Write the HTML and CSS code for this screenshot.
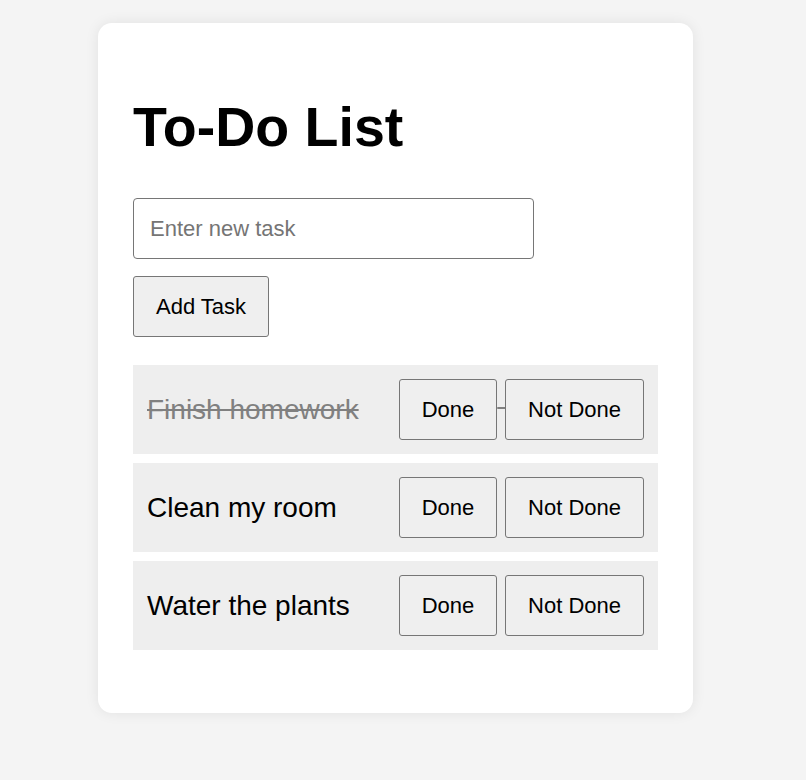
FILE: index.html
```html
<!DOCTYPE html>
<html lang="en">
<head>
<meta charset="utf-8">
<title>To-Do List</title>
<link rel="stylesheet" href="styles.css">
</head>
<body>
<main class="card">
  <h1 class="title">To-Do List</h1>
  <input class="task-input" type="text" placeholder="Enter new task">
  <div class="add-row"><button class="btn">Add Task</button></div>
  <ul class="list">
    <li class="item done">
      <span class="item-text">Finish homework</span>
      <div class="actions"><button class="btn">Done</button> <button class="btn">Not Done</button></div>
    </li>
    <li class="item">
      <span class="item-text">Clean my room</span>
      <div class="actions"><button class="btn">Done</button> <button class="btn">Not Done</button></div>
    </li>
    <li class="item">
      <span class="item-text">Water the plants</span>
      <div class="actions"><button class="btn">Done</button> <button class="btn">Not Done</button></div>
    </li>
  </ul>
</main>
</body>
</html>
```
FILE: styles.css
```css
html, body {
  margin: 0;
  padding: 0;
}
body {
  background: #f4f4f4;
  font-family: "Liberation Sans", Arial, sans-serif;
  padding: 23px 15px 67px 0;
}
.card {
  width: 595px;
  box-sizing: border-box;
  margin: 0 auto;
  background: #fff;
  border-radius: 14px;
  padding: 35px;
  box-shadow: 0 0 14px rgba(0, 0, 0, 0.08);
}
.title {
  font-size: 55.5px;
  font-weight: bold;
  margin: 37px 0 39px;
  color: #000;
}
.task-input {
  display: block;
  width: 401px;
  height: 61px;
  box-sizing: border-box;
  padding: 0 16px;
  font-family: inherit;
  font-size: 22px;
  border: 1px solid #767676;
  border-radius: 4px;
  margin: 0 0 17px;
  outline: none;
}
.task-input::placeholder {
  color: #757575;
}
.btn {
  height: 61px;
  box-sizing: border-box;
  padding: 0 22px;
  font-family: inherit;
  font-size: 22px;
  color: #000;
  background: #efefef;
  border: 1px solid #767676;
  border-radius: 3px;
  vertical-align: baseline;
}
.list {
  list-style: none;
  margin: 28px 0 28px;
  padding: 0;
  display: flex;
  flex-direction: column;
  gap: 9px;
}
.item {
  display: flex;
  align-items: center;
  justify-content: space-between;
  background: #eeeeee;
  padding: 14px;
  font-size: 28px;
  color: #000;
}
.item.done {
  color: #808080;
  text-decoration: line-through;
}
.actions {
  white-space: nowrap;
}
```
